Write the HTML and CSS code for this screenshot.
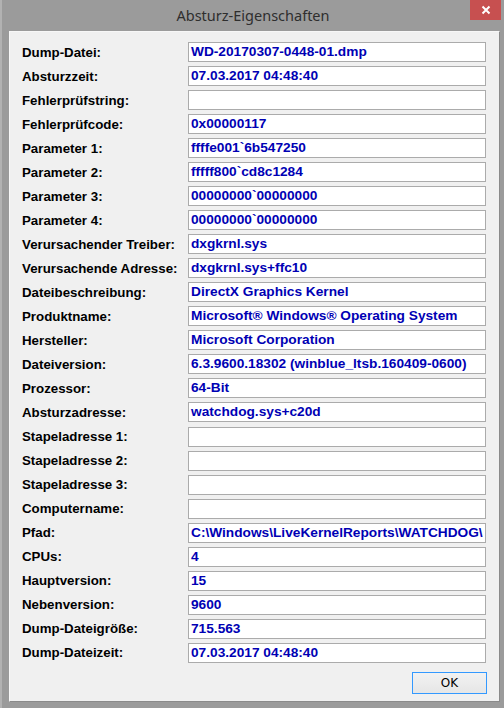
FILE: index.html
```html
<!DOCTYPE html>
<html lang="de">
<head>
    <meta charset="UTF-8">
    <title>Absturz-Eigenschaften</title>
    <link rel="stylesheet" href="styles.css">
</head>
<body>
<div class="window">
    <div class="titlebar">
        <span></span>
        <span class="title">Absturz-Eigenschaften</span>
        <button class="close" type="button" aria-label="Schließen">
            <svg width="10" height="10" viewBox="0 0 10 10">
                <path d="M1.5 1.5 L8.5 8.5 M8.5 1.5 L1.5 8.5" stroke="#fff" stroke-width="2" fill="none"/>
            </svg>
        </button>
    </div>

    <div class="client">
        <div class="props">
            <div class="row"><span class="label">Dump-Datei:</span><div class="field">WD-20170307-0448-01.dmp</div></div>
            <div class="row"><span class="label">Absturzzeit:</span><div class="field">07.03.2017 04:48:40</div></div>
            <div class="row"><span class="label">Fehlerprüfstring:</span><div class="field"></div></div>
            <div class="row"><span class="label">Fehlerprüfcode:</span><div class="field">0x00000117</div></div>
            <div class="row"><span class="label">Parameter 1:</span><div class="field">ffffe001`6b547250</div></div>
            <div class="row"><span class="label">Parameter 2:</span><div class="field">fffff800`cd8c1284</div></div>
            <div class="row"><span class="label">Parameter 3:</span><div class="field">00000000`00000000</div></div>
            <div class="row"><span class="label">Parameter 4:</span><div class="field">00000000`00000000</div></div>
            <div class="row"><span class="label">Verursachender Treiber:</span><div class="field">dxgkrnl.sys</div></div>
            <div class="row"><span class="label">Verursachende Adresse:</span><div class="field">dxgkrnl.sys+ffc10</div></div>
            <div class="row"><span class="label">Dateibeschreibung:</span><div class="field">DirectX Graphics Kernel</div></div>
            <div class="row"><span class="label">Produktname:</span><div class="field">Microsoft® Windows® Operating System</div></div>
            <div class="row"><span class="label">Hersteller:</span><div class="field">Microsoft Corporation</div></div>
            <div class="row"><span class="label">Dateiversion:</span><div class="field">6.3.9600.18302 (winblue_ltsb.160409-0600)</div></div>
            <div class="row"><span class="label">Prozessor:</span><div class="field">64-Bit</div></div>
            <div class="row"><span class="label">Absturzadresse:</span><div class="field">watchdog.sys+c20d</div></div>
            <div class="row"><span class="label">Stapeladresse 1:</span><div class="field"></div></div>
            <div class="row"><span class="label">Stapeladresse 2:</span><div class="field"></div></div>
            <div class="row"><span class="label">Stapeladresse 3:</span><div class="field"></div></div>
            <div class="row"><span class="label">Computername:</span><div class="field"></div></div>
            <div class="row"><span class="label">Pfad:</span><div class="field">C:\Windows\LiveKernelReports\WATCHDOG\</div></div>
            <div class="row"><span class="label">CPUs:</span><div class="field">4</div></div>
            <div class="row"><span class="label">Hauptversion:</span><div class="field">15</div></div>
            <div class="row"><span class="label">Nebenversion:</span><div class="field">9600</div></div>
            <div class="row"><span class="label">Dump-Dateigröße:</span><div class="field">715.563</div></div>
            <div class="row"><span class="label">Dump-Dateizeit:</span><div class="field">07.03.2017 04:48:40</div></div>
        </div>

        <div class="buttons">
            <button class="ok" type="button">OK</button>
        </div>
    </div>
</div>
</body>
</html>
```

FILE: styles.css
```css
html, body {
    margin: 0;
    padding: 0;
}

body {
    width: 504px;
    height: 708px;
    overflow: hidden;
    background: #9b9b9b;
    font-family: "Liberation Sans", Arial, sans-serif;
}

/* window frame (inactive Windows 8 look) */
.window {
    box-sizing: border-box;
    width: 504px;
    height: 708px;
    border-left: 2px solid #b2b2b2;
    padding: 0 4px 6px 7px;
    display: flex;
    flex-direction: column;
}

.titlebar {
    height: 31px;
    display: grid;
    grid-template-columns: 1fr auto 1fr;
    align-items: start;
    margin-left: -7px;
}

.title {
    font-family: "Noto Sans", "Open Sans", sans-serif;
    font-size: 14.5px;
    color: #2e2e2e;
    line-height: 31px;
    padding-left: 4px;
}

.close {
    justify-self: end;
    width: 31px;
    height: 20px;
    margin: 0 -1px 0 0;
    padding: 0;
    border: none;
    background: #c75050;
    display: flex;
    align-items: center;
    justify-content: center;
}

.client {
    flex: 1;
    box-sizing: border-box;
    background: #f0f0f0;
    border-top: 1px solid #f7f7f7;
    border-left: 1px solid #f7f7f7;
    border-right: 1px solid #8a8a8a;
    border-bottom: 1px solid #8a8a8a;
    padding: 10px 12px 0 12px;
}

.props {
    display: flex;
    flex-direction: column;
    gap: 4.04px;
}

.row {
    display: flex;
    align-items: center;
    height: 20px;
}

.label {
    width: 166px;
    flex-shrink: 0;
    font-size: 13.3px;
    font-weight: bold;
    color: #000;
    white-space: nowrap;
}

.field {
    box-sizing: border-box;
    width: 298px;
    height: 20px;
    border: 1px solid #ababab;
    background: #fff;
    padding: 0 2px;
    font-size: 13.7px;
    font-weight: bold;
    color: #0000b4;
    line-height: 18px;
    white-space: nowrap;
    overflow: hidden;
}

.buttons {
    display: flex;
    justify-content: flex-end;
    padding-top: 9px;
}

.ok {
    box-sizing: border-box;
    width: 75px;
    height: 22px;
    border: 1px solid #3399ff;
    background: linear-gradient(to bottom, #f2f2f2, #e6e6e6);
    font-family: "DejaVu Sans", sans-serif;
    font-size: 12px;
    color: #000;
    padding: 0;
}
```
